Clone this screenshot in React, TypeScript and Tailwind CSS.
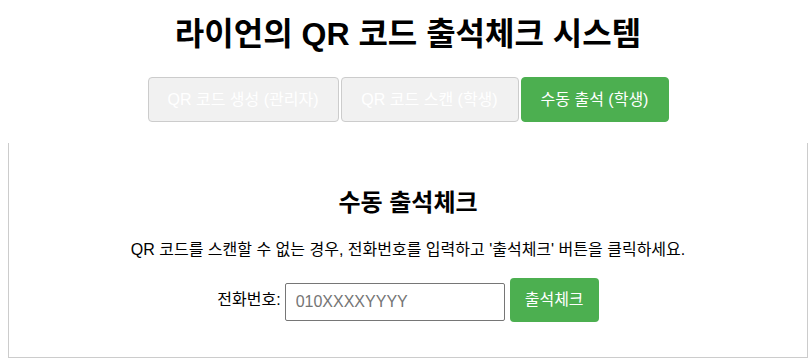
import { useState } from 'react';

const tabs = [
  { id: 'generate', label: 'QR 코드 생성 (관리자)', width: 'w-[191px]' },
  { id: 'scan', label: 'QR 코드 스캔 (학생)', width: 'w-[178px]' },
  { id: 'manual', label: '수동 출석 (학생)', width: 'w-[148px]' },
];

export default function App() {
  const [active, setActive] = useState('manual');
  const [phone, setPhone] = useState('');

  return (
    <div className="min-h-screen bg-white text-black [font-family:'Liberation_Sans','Noto_Sans_CJK_KR',sans-serif]">
      <div className="ml-[8px] w-[800px] pt-[14px]">
        <h1 className="text-center text-[32px] font-bold leading-[40px]">라이언의 QR 코드 출석체크 시스템</h1>

        <div className="mt-[23px] flex justify-center gap-[2px]">
          {tabs.map((tab) => (
            <button
              key={tab.id}
              onClick={() => setActive(tab.id)}
              className={
                active === tab.id
                  ? `${tab.width} h-[45px] rounded-[4px] border border-[#4caf50] bg-[#4caf50] text-[16px] text-white`
                  : `${tab.width} h-[45px] rounded-[4px] border border-[#cccccc] bg-[#f1f1f1] text-[16px] text-white`
              }
            >
              {tab.label}
            </button>
          ))}
        </div>

        <div className="mt-[21px] border border-t-0 border-[#cccccc] pt-[44px] pb-[35px] text-center">
          <h2 className="text-[24px] font-bold leading-[32px]">수동 출석체크</h2>
          <p className="mt-[19px] text-[16px] leading-[24px]">
            QR 코드를 스캔할 수 없는 경우, 전화번호를 입력하고 '출석체크' 버튼을 클릭하세요.
          </p>
          <div className="mt-[16px] flex items-start justify-center">
            <label htmlFor="phone" className="mt-[11px] mr-[4px] text-[16px] leading-[22px]">전화번호:</label>
            <input
              id="phone"
              value={phone}
              onChange={(e) => setPhone(e.target.value)}
              placeholder="010XXXXYYYY"
              className="mt-[5px] h-[38px] w-[220px] rounded-[2px] border border-[#767676] px-[10px] text-[16px] placeholder:text-[#757575] outline-none"
            />
            <button className="ml-[5px] h-[44px] w-[89px] rounded-[4px] bg-[#4caf50] text-[16px] text-white">출석체크</button>
          </div>
        </div>
      </div>
    </div>
  );
}
